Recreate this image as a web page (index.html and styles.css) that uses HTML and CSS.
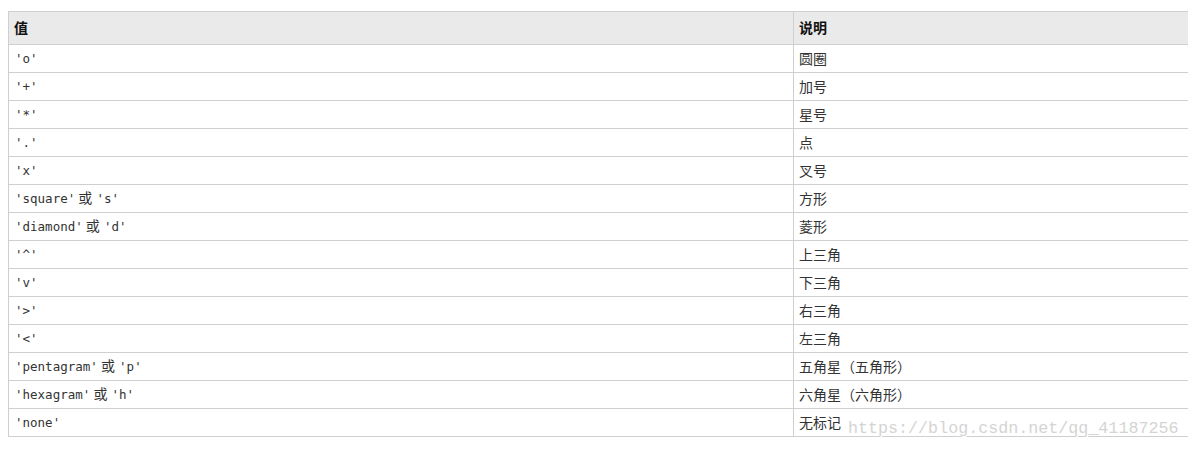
FILE: index.html
```html
<!DOCTYPE html>
<html lang="zh">
<head>
<meta charset="utf-8">
<title>Marker</title>
<link rel="stylesheet" href="styles.css">
</head>
<body>
<div class="page">
  <table class="tbl">
    <colgroup><col class="c1"><col class="c2"></colgroup>
    <thead>
      <tr><th>值</th><th>说明</th></tr>
    </thead>
    <tbody>
      <tr><td><code>'o'</code></td><td>圆圈</td></tr>
      <tr><td><code>'+'</code></td><td>加号</td></tr>
      <tr><td><code>'*'</code></td><td>星号</td></tr>
      <tr><td><code>'.'</code></td><td>点</td></tr>
      <tr><td><code>'x'</code></td><td>叉号</td></tr>
      <tr><td><code>'square'</code> 或 <code>'s'</code></td><td>方形</td></tr>
      <tr><td><code>'diamond'</code> 或 <code>'d'</code></td><td>菱形</td></tr>
      <tr><td><code>'^'</code></td><td>上三角</td></tr>
      <tr><td><code>'v'</code></td><td>下三角</td></tr>
      <tr><td><code>'&gt;'</code></td><td>右三角</td></tr>
      <tr><td><code>'&lt;'</code></td><td>左三角</td></tr>
      <tr><td><code>'pentagram'</code> 或 <code>'p'</code></td><td>五角星（五角形）</td></tr>
      <tr><td><code>'hexagram'</code> 或 <code>'h'</code></td><td>六角星（六角形）</td></tr>
      <tr><td><code>'none'</code></td><td>无标记</td></tr>
    </tbody>
  </table>
  <div class="watermark">https://blog.csdn.net/qq_41187256</div>
</div>
</body>
</html>
```

FILE: styles.css
```css
html, body {
  margin: 0;
  padding: 0;
  overflow: hidden;
  background: #fff;
}
.page {
  position: relative;
  padding: 11px 0 0 8px;
  width: 1200px;
  height: 440px;
  font-family: "Noto Sans CJK SC", "Microsoft YaHei", sans-serif;
  color: #333;
}
.tbl {
  border-collapse: collapse;
  table-layout: fixed;
  width: 1192px;
  font-size: 14px;
}
.c1 { width: 785px; }
.tbl th,
.tbl td {
  border: 1px solid #cfcfcf;
  padding: 0 5px 2px;
  text-align: left;
  vertical-align: middle;
  white-space: nowrap;
}
.tbl th {
  height: 30px;
  background: #eaeaea;
  font-weight: bold;
  color: #111;
  line-height: 20px;
}
.tbl td {
  height: 25px;
  line-height: 20px;
}
.tbl code {
  font-family: "DejaVu Sans Mono", "Liberation Mono", monospace;
  font-size: 12.5px;
  color: #333;
  padding-left: 1px;
}
.watermark {
  position: absolute;
  left: 848px;
  top: 418px;
  font-family: "Liberation Mono", "DejaVu Sans Mono", monospace;
  font-size: 16.7px;
  line-height: 22px;
  color: #d4d4d4;
  text-shadow: 1px 1px 0 #fff;
  white-space: nowrap;
}
```
